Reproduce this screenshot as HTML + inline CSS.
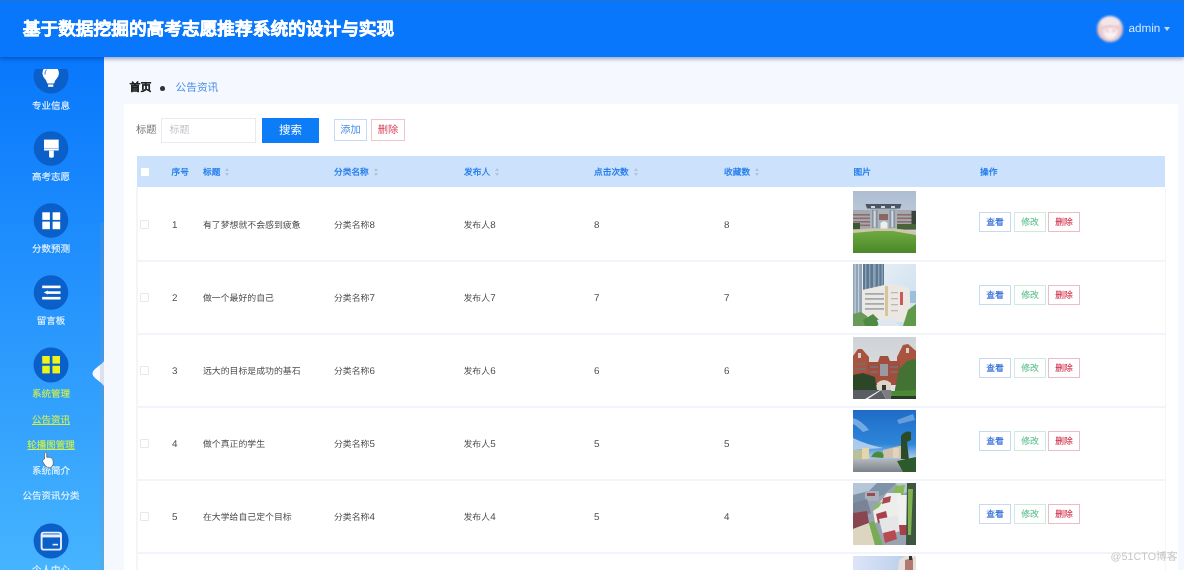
<!DOCTYPE html>
<html lang="zh-CN">
<head>
<meta charset="utf-8">
<style>
*{box-sizing:border-box;margin:0;padding:0}
html,body{width:1184px;height:570px;overflow:hidden;background:#f5f8fe;font-family:"Liberation Sans",sans-serif;text-rendering:geometricPrecision}
.abs{position:absolute}
#hdr{position:absolute;left:0;top:0;width:1184px;height:56.9px;background:#0877fc;border-top:1px solid #2174d4;z-index:5;box-shadow:0 1.5px 4px rgba(0,30,100,.38)}
#title{position:absolute;left:22.8px;top:15.5px;font-size:17.7px;font-weight:bold;color:#fff;-webkit-text-stroke:0.35px #fff;white-space:nowrap;line-height:24px}
#avatar{position:absolute;left:1097px;top:14.5px;width:26px;height:26px;filter:blur(0.8px)}
#uname{position:absolute;left:1128.5px;top:20.8px;font-size:11.7px;color:#d2e6ff;line-height:14px}
#caret{position:absolute;left:1164px;top:26px;width:0;height:0;border-left:3.2px solid transparent;border-right:3.2px solid transparent;border-top:4px solid #c4dcfc}
#side{position:absolute;left:0;top:56px;width:104.4px;height:514px;background:linear-gradient(#0877fc 0%,#46b4fe 100%);overflow:hidden;z-index:2}
.mi{position:absolute;left:0;width:105px}
.circ{position:absolute;left:34px;width:34px;height:34px;border-radius:50%;background:#0a5fc8}
.lbl{position:absolute;left:0;width:102px;text-align:center;font-size:9.5px;color:#e9f4ff;line-height:12px;white-space:nowrap;-webkit-text-stroke:0.12px currentColor}
#main{position:absolute;left:105px;top:56px;width:1079px;height:514px}
#card{position:absolute;left:124px;top:104px;width:1054px;height:470px;background:#fff}
.bc{position:absolute;top:80px;font-size:11px;line-height:14px}
.th{position:absolute;top:166px;font-size:8.7px;font-weight:bold;color:#2a80ee;line-height:12px;white-space:nowrap}
.td{position:absolute;font-size:8.9px;color:#4e4e4e;line-height:12px;white-space:nowrap}
.n{font-size:9.8px}
.sort{display:inline-block;width:5px;height:9px;vertical-align:middle;margin-left:5px;position:relative}
.sort:before{content:"";position:absolute;left:0;top:0;border-left:2.5px solid transparent;border-right:2.5px solid transparent;border-bottom:3px solid #b4c2d4}
.sort:after{content:"";position:absolute;left:0;top:5px;border-left:2.5px solid transparent;border-right:2.5px solid transparent;border-top:3px solid #b4c2d4}
.rowline{position:absolute;left:137px;width:1028px;height:2px;background:#f1f5fb}
.cb{position:absolute;left:140px;width:9px;height:9px;border:1px solid #e6e8ec;border-radius:1px;background:#fff}
.pic{position:absolute;left:853px;width:63px;height:62px;overflow:hidden;filter:blur(0.6px)}
.btn{position:absolute;width:32px;height:20px;border:1px solid;font-size:8.8px;line-height:19.5px;-webkit-text-stroke:0.1px currentColor;text-align:center;background:#fff;white-space:nowrap}
.b1{left:979px;border-color:#c6daf4;color:#2a6ad8}
.b2{left:1014px;border-color:#cdebdc;color:#62c090}
.b3{left:1048px;border-color:#eabcc3;color:#d0304a}
</style>
</head>
<body style="filter:blur(0.45px)">
<svg width="0" height="0" style="position:absolute"><defs><filter id="bl" x="-5%" y="-5%" width="110%" height="110%"><feGaussianBlur stdDeviation="0.55"/></filter></defs></svg>
<div id="hdr">
  <div id="title">基于数据挖掘的高考志愿推荐系统的设计与实现</div>
  <svg id="avatar" width="26" height="26" viewBox="0 0 26 26"><defs><clipPath id="av"><circle cx="13" cy="13" r="13"/></clipPath></defs><g clip-path="url(#av)"><rect width="26" height="26" fill="#e9cdd2"/><ellipse cx="13" cy="6" rx="10" ry="6" fill="#f4e6e8"/><path d="M0 8 Q2 20 5 26 L0 26 Z" fill="#cf9ea8"/><path d="M26 8 Q24 20 21 26 L26 26 Z" fill="#d4a8b0"/><ellipse cx="13.5" cy="15.5" rx="7" ry="7.5" fill="#fbf1f2"/><path d="M6 11 Q13 7 21 11 L20 13 Q13 10 7 13 Z" fill="#e4c0c6"/><rect x="8.5" y="14" width="3.5" height="1.6" fill="#d6b4ba"/><rect x="15" y="14" width="3.5" height="1.6" fill="#d6b4ba"/><path d="M4 22 L9 26 L3 26 Z" fill="#8a6068"/></g></svg>
  <div id="uname">admin</div>
  <div id="caret"></div>
</div>

<div id="side">
<div class="lbl" style="top:44.5px;color:#e9f4ff">专业信息</div>
<div class="lbl" style="top:116.3px;color:#e9f4ff">高考志愿</div>
<div class="lbl" style="top:188.3px;color:#e9f4ff">分数预测</div>
<div class="lbl" style="top:260.3px;color:#e9f4ff">留言板</div>
<div class="lbl" style="top:333.1px;color:#cdef4c">系统管理</div>
<div class="lbl" style="top:359.3px;color:#cdef4c"><span style="text-decoration:underline">公告资讯</span></div>
<div class="lbl" style="top:384.2px;color:#cdef4c"><span style="text-decoration:underline">轮播图管理</span></div>
<div class="lbl" style="top:410.0px">系统简介</div>
<div class="lbl" style="top:434.9px">公告资讯分类</div>
<div class="lbl" style="top:508.7px">个人中心</div>
<svg class="abs" style="left:0;top:-56px" width="105" height="626" viewBox="0 0 105 626">
<defs><clipPath id="c1"><rect x="0" y="69" width="105" height="600"/></clipPath></defs>
<g clip-path="url(#c1)">
<circle cx="51" cy="76" r="17.5" fill="#0a5fc8"/>
<circle cx="50.7" cy="73.2" r="8.2" fill="#fff"/><path d="M45.5 79 L55.9 79 L54.1 83.4 L47.3 83.4 Z" fill="#fff"/>
<rect x="48.1" y="84.5" width="5.2" height="2.3" fill="#fff"/>
<path d="M46.6 69.6 Q44.6 71.6 45 74.6" stroke="#3a7ad8" stroke-width="1" fill="none"/>
</g>
<circle cx="51" cy="148.5" r="17.3" fill="#0a5fc8"/>
<rect x="44" y="139.6" width="14.7" height="10.9" fill="#fff"/>
<rect x="44" y="147.9" width="14.7" height="0.9" fill="#9fb6d8"/>
<path d="M49.1 150.4 L53.8 150.4 L53.8 156.6 Q53.8 157.8 51.45 157.8 Q49.1 157.8 49.1 156.6 Z" fill="#fff"/>
<circle cx="51" cy="220.5" r="17.3" fill="#0a5fc8"/>
<g fill="#fff"><rect x="42.3" y="212.3" width="7.6" height="7.6"/><rect x="52.6" y="212.3" width="7.6" height="7.6"/><rect x="42.3" y="221.6" width="7.6" height="7.6"/><rect x="52.6" y="221.6" width="7.6" height="7.6"/></g>
<circle cx="51" cy="292.5" r="17.3" fill="#0a5fc8"/>
<g fill="#fff"><rect x="42.2" y="285.6" width="18.3" height="2.6"/><rect x="48" y="291.3" width="12.5" height="2.6"/><path d="M43.6 292.6 L48 290.6 L48 294.6 Z"/><rect x="42.2" y="296.9" width="18.3" height="2.6"/></g>
<circle cx="51" cy="365" r="17.5" fill="#0a5fc8"/>
<g fill="#ecf41a"><rect x="42.2" y="356" width="7.6" height="7.6"/><rect x="52.4" y="356" width="7.6" height="7.6"/><rect x="42.2" y="365.8" width="7.6" height="7.6"/><rect x="52.4" y="365.8" width="7.6" height="7.6"/></g>
<circle cx="51.1" cy="541" r="17.5" fill="#0a5fc8"/>
<rect x="41.6" y="532.6" width="19.4" height="17" rx="2.2" fill="none" stroke="#e8f0ff" stroke-width="1.9"/>
<rect x="41.6" y="534.4" width="19.4" height="3" fill="#e8f0ff"/>
<rect x="52.6" y="543.8" width="5.4" height="1.6" fill="#e8f0ff"/>
<path d="M44.5 459 L44.5 453.8 Q44.5 452.6 45.6 452.6 Q46.7 452.6 46.7 453.8 L46.7 457.3 Q48.6 457 50.5 457.6 Q53.2 458.4 53.2 461 L53.2 463.7 Q53 466.5 50.6 467.4 L47.8 467.4 Q46 466.8 44.8 465 L42.4 461.2 Q42.2 459.9 43.4 459.8 Z" fill="#fff" stroke="#444" stroke-width="0.6"/>
</svg>
<svg class="abs" style="left:90px;top:300px" width="16" height="36" viewBox="0 0 16 36"><path d="M15 0 L15 2 C15 8 2.5 12 2.5 17.5 C2.5 23 15 27 15 33 L15 36 L16 36 L16 0 Z" fill="#f5f8fe"/></svg>
<div class="abs" style="left:100px;top:167px;width:4.4px;height:347px;background:rgba(130,145,170,.22)"></div>

</div>

<div id="card"></div>

<!-- breadcrumb -->
<div class="bc" style="left:129.5px;top:80.5px;font-weight:bold;color:#222;-webkit-text-stroke:0.2px #222">首页</div>
<div class="abs" style="left:160.3px;top:85.5px;width:5px;height:5px;border-radius:50%;background:#303133"></div>
<div class="bc" style="left:175.5px;top:80.5px;font-size:10.7px;color:#4a90e8">公告资讯</div>

<!-- toolbar -->
<div class="abs" style="left:136px;top:124.5px;font-size:10.3px;color:#777;line-height:12px">标题</div>
<div class="abs" style="left:161px;top:117.5px;width:95px;height:25px;border:1px solid #e8eaee;background:#fff"></div>
<div class="abs" style="left:169.5px;top:124.5px;font-size:10px;color:#c0c4cc;line-height:12px">标题</div>
<div class="abs" style="left:262px;top:117.5px;width:57px;height:25px;background:#0d7cf7;color:#fff;font-size:11.5px;line-height:26px;text-align:center">搜索</div>
<div class="abs" style="left:334px;top:119px;width:33px;height:22px;border:1px solid #c4daf5;background:#fff;color:#4a90ea;font-size:10.3px;line-height:21px;text-align:center">添加</div>
<div class="abs" style="left:371px;top:119px;width:34px;height:22px;border:1px solid #efc4ca;background:#fff;color:#d6455a;font-size:10.3px;line-height:21px;text-align:center">删除</div>

<!-- table -->
<div class="abs" style="left:137px;top:156px;width:1028px;height:31.4px;background:#cbe1fc"></div>
<div class="abs" style="left:136px;top:187px;width:1.5px;height:400px;background:#f4f5f6"></div>
<div class="abs" style="left:1164.5px;top:187px;width:1.5px;height:400px;background:#f4f5f6"></div>
<div class="abs" style="left:140.5px;top:168px;width:8px;height:8px;background:#fff;border-radius:1px"></div>
<div class="th" style="left:171.5px">序号</div>
<div class="th" style="left:203px">标题<span class="sort"></span></div>
<div class="th" style="left:334px">分类名称<span class="sort"></span></div>
<div class="th" style="left:464px">发布人<span class="sort"></span></div>
<div class="th" style="left:594px">点击次数<span class="sort"></span></div>
<div class="th" style="left:724px">收藏数<span class="sort"></span></div>
<div class="th" style="left:853.5px">图片</div>
<div class="th" style="left:980px">操作</div>

<div class="rowline" style="top:259.5px"></div>
<svg class="pic" style="top:190.5px" width="63" height="62" viewBox="0 0 63 62"><defs><linearGradient id="s1" x1="0" y1="0" x2="0" y2="1"><stop offset="0" stop-color="#adbdd2"/><stop offset="1" stop-color="#d6dce4"/></linearGradient>
<linearGradient id="g1" x1="0" y1="0" x2="0" y2="1"><stop offset="0" stop-color="#6eaa40"/><stop offset="1" stop-color="#4a8828"/></linearGradient></defs>
<rect width="63" height="62" fill="url(#s1)"/>
<rect x="0" y="19" width="63" height="20" fill="#a4a9b0"/>
<g fill="#8e6c6c"><rect x="0" y="23" width="18" height="1.6"/><rect x="0" y="26.5" width="18" height="1.6"/><rect x="0" y="30" width="18" height="1.6"/><rect x="0" y="33.5" width="18" height="1.6"/><rect x="44" y="23" width="15" height="1.6"/><rect x="44" y="26.5" width="15" height="1.6"/><rect x="44" y="30" width="15" height="1.6"/><rect x="44" y="33.5" width="15" height="1.6"/></g>
<rect x="17" y="17" width="27" height="21" fill="#aab2bc"/>
<g fill="#8894a2"><rect x="19" y="19" width="1.6" height="18"/><rect x="23" y="19" width="1.6" height="18"/><rect x="36.5" y="19" width="1.6" height="18"/><rect x="40.5" y="19" width="1.6" height="18"/></g>
<g fill="#d4dae2"><rect x="20.8" y="20" width="1.6" height="16"/><rect x="38.5" y="20" width="1.6" height="16"/></g>
<rect x="26" y="23" width="9" height="6" fill="#8c6660"/>
<path d="M12.5 13 L48.5 13 L47 17.4 L14 17.4 Z" fill="#4c5662"/>
<g fill="#cfd6de"><rect x="18" y="15" width="4" height="2"/><rect x="28" y="15" width="4" height="2"/><rect x="38" y="15" width="4" height="2"/></g>
<path d="M27.5 38 L27.5 32 Q31 28.5 34.5 32 L34.5 38 Z" fill="#eceeee"/>
<rect x="58.5" y="20" width="4.5" height="18" fill="#36443c"/>
<rect x="0" y="32" width="7" height="6.5" fill="#3c5832"/><rect x="44" y="33" width="19" height="5.5" fill="#4a6238"/>
<path d="M0 38.5 L20 37.5 L42 37.5 L63 40.5 L63 44 L40 40 L22 40 L0 42 Z" fill="#cdc6a8"/>
<path d="M0 42 L22 40 L40 40 L63 44 L63 62 L0 62 Z" fill="url(#g1)"/></svg>
<div class="cb" style="top:219.5px"></div>
<div class="td" style="left:172px;top:219.0px"><span class="n">1</span></div>
<div class="td" style="left:203px;top:219.0px">有了梦想就不会感到疲惫</div>
<div class="td" style="left:334px;top:219.0px">分类名称<span class="n">8</span></div>
<div class="td" style="left:463.5px;top:219.0px">发布人<span class="n">8</span></div>
<div class="td" style="left:594px;top:219.0px"><span class="n">8</span></div>
<div class="td" style="left:724px;top:219.0px"><span class="n">8</span></div>
<div class="btn b1" style="top:212.0px">查看</div>
<div class="btn b2" style="top:212.0px">修改</div>
<div class="btn b3" style="top:212.0px">删除</div>
<div class="rowline" style="top:332.5px"></div>
<svg class="pic" style="top:263.5px" width="63" height="62" viewBox="0 0 63 62"><defs><linearGradient id="s2" x1="0" y1="0" x2="1" y2="1"><stop offset="0" stop-color="#eef3f7"/><stop offset="1" stop-color="#c6dcee"/></linearGradient></defs>
<rect width="63" height="62" fill="url(#s2)"/>
<rect x="0" y="0" width="9" height="52" fill="#90a4b6"/>
<g fill="#c4d0da"><rect x="1.5" y="0" width="1.2" height="50"/><rect x="5" y="0" width="1.2" height="50"/></g>
<rect x="10" y="0" width="21" height="26" fill="#5e7890"/>
<g fill="#8aa2b8"><rect x="12" y="0" width="1.4" height="26"/><rect x="16" y="0" width="1.4" height="26"/><rect x="20" y="0" width="2.6" height="26"/><rect x="25" y="0" width="1.4" height="26"/><rect x="28.5" y="0" width="1.4" height="26"/></g>
<path d="M9 26 L38 19.5 L56 24 L58 50 L50 58 L24 58 L9 54 Z" fill="#ebe8e4"/>
<g fill="#9aa0aa" opacity="0.85"><rect x="12" y="29" width="19" height="1.8"/><rect x="12" y="34" width="19" height="1.8"/><rect x="12" y="39" width="19" height="1.8"/><rect x="12" y="44" width="19" height="1.8"/></g>
<rect x="32" y="22" width="3" height="30" fill="#d8c49a"/>
<g fill="#bdb8b2"><rect x="38" y="28" width="7" height="1.3"/><rect x="38" y="34" width="7" height="1.3"/><rect x="38" y="40" width="7" height="1.3"/><rect x="38" y="46" width="7" height="1.3"/></g>
<rect x="47" y="28" width="3" height="13" fill="#c85a5e"/>
<rect x="57" y="27" width="6" height="12" fill="#9cc0d8"/>
<path d="M0 50 L8 48 L14 52 L18 62 L0 62 Z" fill="#6a9a5a"/>
<path d="M10 56 L20 50 L28 58 L24 62 L12 62 Z" fill="#4e8a44"/>
<path d="M50 62 L55 46 L63 40 L63 62 Z" fill="#5e9a4a"/>
<path d="M24 56 L40 54 L46 62 L26 62 Z" fill="#dfe8ee"/></svg>
<div class="cb" style="top:292.5px"></div>
<div class="td" style="left:172px;top:292.0px"><span class="n">2</span></div>
<div class="td" style="left:203px;top:292.0px">做一个最好的自己</div>
<div class="td" style="left:334px;top:292.0px">分类名称<span class="n">7</span></div>
<div class="td" style="left:463.5px;top:292.0px">发布人<span class="n">7</span></div>
<div class="td" style="left:594px;top:292.0px"><span class="n">7</span></div>
<div class="td" style="left:724px;top:292.0px"><span class="n">7</span></div>
<div class="btn b1" style="top:285.0px">查看</div>
<div class="btn b2" style="top:285.0px">修改</div>
<div class="btn b3" style="top:285.0px">删除</div>
<div class="rowline" style="top:405.5px"></div>
<svg class="pic" style="top:336.5px" width="63" height="62" viewBox="0 0 63 62"><defs><linearGradient id="s3" x1="0" y1="0" x2="0" y2="1"><stop offset="0" stop-color="#cfd2d6"/><stop offset="1" stop-color="#e4e5e7"/></linearGradient></defs>
<rect width="63" height="62" fill="url(#s3)"/>
<path d="M0 19 L5 12 L9 12 L16 20 L16 46 L0 46 Z" fill="#a8543f"/>
<path d="M44 20 L50 8 L55 7 L63 14 L63 42 L44 42 Z" fill="#a8543f"/>
<path d="M14 25 L25 25 L27 19 L35 19 L37 24 L47 24 L47 48 L14 48 Z" fill="#a04e3e"/>
<rect x="27" y="27" width="8" height="12" fill="#9a9aa0"/>
<g fill="#806a68"><rect x="2" y="26" width="11" height="2"/><rect x="2" y="31" width="11" height="2"/><rect x="37" y="29" width="8" height="2"/><rect x="37" y="34" width="8" height="2"/><rect x="17" y="29" width="8" height="2"/><rect x="17" y="34" width="8" height="2"/></g>
<rect x="5" y="16" width="3" height="5" fill="#d8d0c8"/><rect x="53" y="11" width="3" height="5" fill="#d8d0c8"/>
<path d="M24 54 L24 46 Q31 40 38 46 L38 54 Z" fill="#ddd6c8"/>
<rect x="29" y="48" width="4" height="6" fill="#3a3430"/>
<path d="M0 38 L10 36 L22 40 L24 53 L0 54 Z" fill="#2c4628"/>
<path d="M42 52 L46 32 L54 24 L63 22 L63 55 L42 55 Z" fill="#447234"/>
<path d="M0 53 L28 53 L33 62 L0 62 Z" fill="#5a5e64"/>
<path d="M28 53 L38 53 L41 62 L33 62 Z" fill="#7c7e82"/>
<path d="M12 62 L27 53 L28.5 53 L15 62 Z" fill="#ececec"/>
<path d="M38 54 L63 53 L63 62 L40 62 Z" fill="#4a8a34"/>
<rect x="38" y="59" width="25" height="3" fill="#2a3a28"/></svg>
<div class="cb" style="top:365.5px"></div>
<div class="td" style="left:172px;top:365.0px"><span class="n">3</span></div>
<div class="td" style="left:203px;top:365.0px">远大的目标是成功的基石</div>
<div class="td" style="left:334px;top:365.0px">分类名称<span class="n">6</span></div>
<div class="td" style="left:463.5px;top:365.0px">发布人<span class="n">6</span></div>
<div class="td" style="left:594px;top:365.0px"><span class="n">6</span></div>
<div class="td" style="left:724px;top:365.0px"><span class="n">6</span></div>
<div class="btn b1" style="top:358.0px">查看</div>
<div class="btn b2" style="top:358.0px">修改</div>
<div class="btn b3" style="top:358.0px">删除</div>
<div class="rowline" style="top:478.5px"></div>
<svg class="pic" style="top:409.5px" width="63" height="62" viewBox="0 0 63 62"><defs><linearGradient id="s4" x1="0" y1="0" x2="0" y2="1"><stop offset="0" stop-color="#1e6cc8"/><stop offset="0.55" stop-color="#2e86d8"/><stop offset="0.75" stop-color="#9ec4e8"/></linearGradient>
<linearGradient id="r4" x1="0" y1="0" x2="0" y2="1"><stop offset="0" stop-color="#b4b8bc"/><stop offset="1" stop-color="#7c828a"/></linearGradient></defs>
<rect width="63" height="62" fill="url(#s4)"/>
<path d="M0 8 Q8 10 16 20 L10 22 Q4 16 0 14 Z" fill="#8ab6e4" opacity="0.8"/>
<path d="M0 28 Q12 34 30 38 L0 40 Z" fill="#b8d2ee" opacity="0.9"/>
<path d="M44 10 L60 4 L62 10 L46 14 Z" fill="#80b0e0" opacity="0.7"/>
<rect x="9" y="38" width="7" height="11" fill="#e4d6a8"/>
<rect x="0" y="40" width="9" height="9" fill="#bcc09a"/>
<path d="M30 40 L46 36 L54 36 L54 48 L30 48 Z" fill="#cfc2ae"/>
<rect x="40" y="38" width="6" height="10" fill="#e0d4c0"/>
<path d="M18 47 Q22 40 28 42 Q32 44 30 48 Z" fill="#4a8a3a"/>
<path d="M48 26 Q52 20 58 22 L58 30 L54 32 L56 50 L48 50 Z" fill="#2a4a2a"/>
<path d="M0 49 L52 49 L54 62 L0 62 Z" fill="url(#r4)"/>
<path d="M44 51 L63 47 L63 62 L50 62 Z" fill="#2c5a2a"/></svg>
<div class="cb" style="top:438.5px"></div>
<div class="td" style="left:172px;top:438.0px"><span class="n">4</span></div>
<div class="td" style="left:203px;top:438.0px">做个真正的学生</div>
<div class="td" style="left:334px;top:438.0px">分类名称<span class="n">5</span></div>
<div class="td" style="left:463.5px;top:438.0px">发布人<span class="n">5</span></div>
<div class="td" style="left:594px;top:438.0px"><span class="n">5</span></div>
<div class="td" style="left:724px;top:438.0px"><span class="n">5</span></div>
<div class="btn b1" style="top:431.0px">查看</div>
<div class="btn b2" style="top:431.0px">修改</div>
<div class="btn b3" style="top:431.0px">删除</div>
<div class="rowline" style="top:551.5px"></div>
<svg class="pic" style="top:482.5px" width="63" height="62" viewBox="0 0 63 62"><rect width="63" height="62" fill="#98a4b2"/>
<path d="M0 0 L44 0 L30 12 L0 20 Z" fill="#7e92a8"/>
<path d="M0 0 L24 0 L16 8 L0 12 Z" fill="#b4c6d8"/>
<path d="M42 0 L63 0 L63 8 L50 10 Z" fill="#b8c8d4"/>
<rect x="12" y="8" width="14" height="10" fill="#a8b0bc"/>
<rect x="14" y="10" width="8" height="3" fill="#9a4a52"/>
<path d="M0 20 L14 16 L18 30 L0 38 Z" fill="#7a8496"/>
<path d="M0 30 L14 28 L16 40 L0 46 Z" fill="#8a4650"/>
<path d="M42 3 L52 2 L50 12 L40 12 Z" fill="#88b858"/>
<path d="M34 10 L48 10 L46 34 L22 40 L20 28 Z" fill="#ededec"/>
<path d="M30 15 L38 13 L37 19 L29 21 Z" fill="#a84a52"/>
<path d="M23 31 L33 28 L35 37 L25 40 Z" fill="#a8424a"/>
<path d="M26 36 L46 32 L48 48 L30 52 Z" fill="#e6e6e8"/>
<path d="M44 12 L54 12 L54 42 L46 44 Z" fill="#f0f0f0"/>
<path d="M46 42 L54 42 L54 52 L47 52 Z" fill="#a8404a"/>
<path d="M30 50 L42 47 L44 56 L32 60 Z" fill="#b84a52"/>
<path d="M54 0 L63 0 L63 62 L53 62 Z" fill="#3e5640"/>
<path d="M55 6 L60 6 L58 52 L55 52 Z" fill="#80b050"/>
<path d="M0 46 L16 40 L22 62 L0 62 Z" fill="#dcd6c0"/>
<path d="M16 40 L21 38 L30 62 L22 62 Z" fill="#78ac54"/>
<path d="M20 28 L26 24 L30 18 L22 22 Z" fill="#88bc60"/></svg>
<div class="cb" style="top:511.5px"></div>
<div class="td" style="left:172px;top:511.0px"><span class="n">5</span></div>
<div class="td" style="left:203px;top:511.0px">在大学给自己定个目标</div>
<div class="td" style="left:334px;top:511.0px">分类名称<span class="n">4</span></div>
<div class="td" style="left:463.5px;top:511.0px">发布人<span class="n">4</span></div>
<div class="td" style="left:594px;top:511.0px"><span class="n">5</span></div>
<div class="td" style="left:724px;top:511.0px"><span class="n">4</span></div>
<div class="btn b1" style="top:504.0px">查看</div>
<div class="btn b2" style="top:504.0px">修改</div>
<div class="btn b3" style="top:504.0px">删除</div>
<div class="rowline" style="top:624.5px"></div>
<svg class="pic" style="top:555.5px" width="63" height="62" viewBox="0 0 63 62"><defs><linearGradient id="s6" x1="0" y1="0" x2="1" y2="0"><stop offset="0" stop-color="#dde4f8"/><stop offset="1" stop-color="#b4cce8"/></linearGradient></defs>
<rect width="63" height="62" fill="url(#s6)"/>
<path d="M40 62 L46 4 L52 0 L63 0 L63 62 Z" fill="#e6e0da"/>
<path d="M52 4 L60 2 L60 62 L52 62 Z" fill="#b07870"/>
<rect x="56" y="0" width="3" height="4" fill="#333"/></svg>
<div class="abs" style="left:1110.5px;top:550px;font-size:10.8px;color:#c6c6c6;line-height:14px;white-space:nowrap">@51CTO博客</div>
</body>
</html>
